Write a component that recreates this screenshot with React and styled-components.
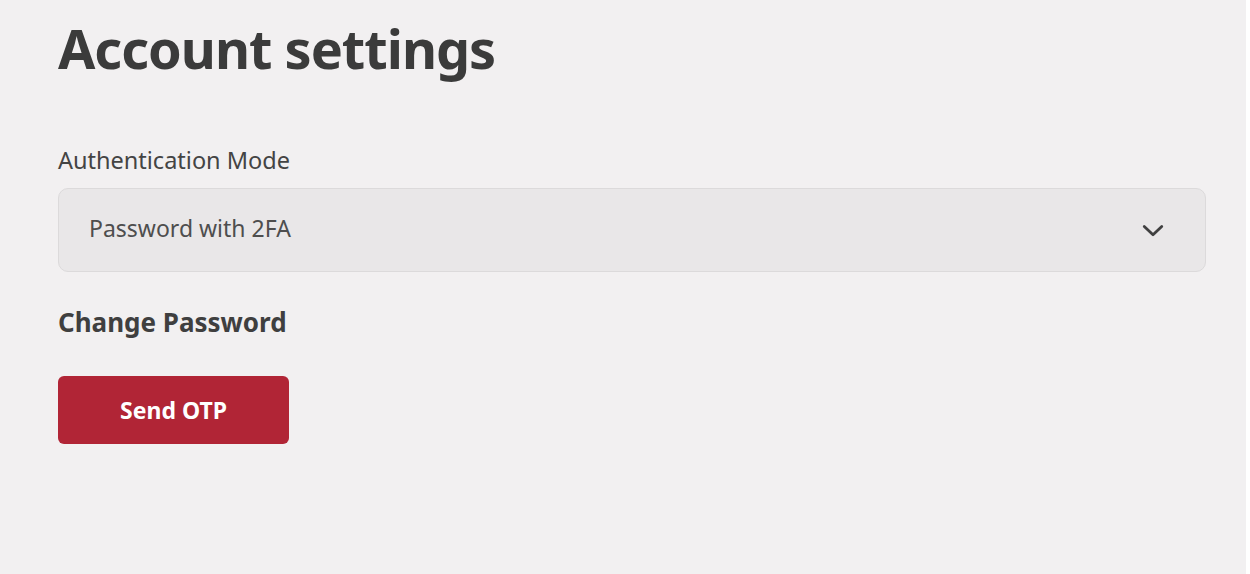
import React from "react"
import styled, { createGlobalStyle } from "styled-components"

const GlobalStyle = createGlobalStyle`
  html, body {
    margin: 0;
    background: #ffffff;
  }
  body {
    font-family: "Noto Sans", "Open Sans", sans-serif;
    color: #3d3d3d;
  }
`

export default function App() {
  return (
    <>
      <GlobalStyle />
      <Page>
        <Title>Account settings</Title>
        <Field>
          <Label htmlFor="auth-mode">Authentication Mode</Label>
          <SelectBox id="auth-mode">
            <ValueText>Password with 2FA</ValueText>
            <Chevron viewBox="0 0 24 24" aria-hidden="true">
              <path d="M4.5 9l7.5 7 7.5-7" />
            </Chevron>
          </SelectBox>
        </Field>
        <SectionTitle>Change Password</SectionTitle>
        <PrimaryButton type="button">Send OTP</PrimaryButton>
      </Page>
    </>
  )
}

const Page = styled.main`
  box-sizing: border-box;
  min-height: 100vh;
  margin-right: 4px;
  padding: 12px 40px 0 58px;
  background: #f2f0f1;
  display: flex;
  flex-direction: column;
  align-items: flex-start;
`

const Title = styled.h1`
  margin: 0;
  font-size: 54px;
  font-weight: 700;
  line-height: 72px;
  letter-spacing: -1px;
  color: #3b3b3b;
`

const Field = styled.div`
  margin-top: 62px;
  width: 100%;
  display: flex;
  flex-direction: column;
  gap: 14px;
`

const Label = styled.label`
  font-size: 23.5px;
  line-height: 28px;
  color: #444444;
`

const SelectBox = styled.div`
  box-sizing: border-box;
  width: 100%;
  height: 84px;
  padding: 0 38px 0 30px;
  border: 1px solid #dcdadb;
  border-radius: 10px;
  background: #e9e7e8;
  display: flex;
  align-items: center;
  justify-content: space-between;
  font-size: 23px;
  color: #4e4e4e;
`

const ValueText = styled.span`
  margin-bottom: 5px;
`

const Chevron = styled.svg`
  width: 28px;
  height: 28px;
  fill: none;
  stroke: #404040;
  stroke-width: 2.4;
  stroke-linecap: round;
  stroke-linejoin: round;
`

const SectionTitle = styled.h2`
  margin: 34px 0 0;
  font-size: 26px;
  font-weight: 700;
  line-height: 32px;
  color: #3f3f3f;
`

const PrimaryButton = styled.button`
  margin-top: 38px;
  width: 231px;
  height: 68px;
  border: none;
  border-radius: 6px;
  background: #b12536;
  color: #ffffff;
  font-family: inherit;
  font-size: 23px;
  font-weight: 700;
  cursor: pointer;
`
